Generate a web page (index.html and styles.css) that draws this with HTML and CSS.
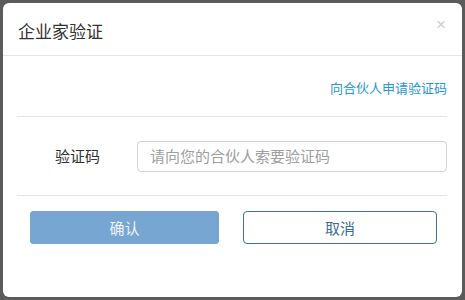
FILE: index.html
```html
<!DOCTYPE html>
<html lang="zh">
<head>
    <meta charset="UTF-8">
    <title>企业家验证</title>
    <link rel="stylesheet" href="styles.css">
</head>
<body>
    <div class="modal">
        <div class="modal-header">
            <h3>企业家验证</h3>
            <span class="close">×</span>
        </div>
        <div class="modal-body">
            <div class="link-row">
                <a href="#" class="apply-link">向合伙人申请验证码</a>
            </div>
            <div class="form-row">
                <label class="label">验证码</label>
                <input class="input" type="text" placeholder="请向您的合伙人索要验证码">
            </div>
            <div class="buttons">
                <button class="btn btn-confirm">确认</button>
                <button class="btn btn-cancel">取消</button>
            </div>
        </div>
    </div>
</body>
</html>
```

FILE: styles.css
```css
body {
    margin: 0;
    padding: 3px;
    background-color: #5b5b5b;
    font-family: "Liberation Sans", "Noto Sans CJK SC", sans-serif;
}
.modal {
    width: 459px;
    height: 294px;
    background-color: #fff;
    border-radius: 6px;
    box-sizing: border-box;
}
.modal-header {
    height: 53px;
    border-bottom: 1px solid #e5e5e5;
    display: flex;
    align-items: center;
    justify-content: space-between;
    padding: 0 15px;
    box-sizing: border-box;
}
.modal-header h3 {
    margin: 0;
    font-size: 17px;
    font-weight: normal;
    color: #333;
    padding-top: 3px;
}
.close {
    color: #cfcfcf;
    font-size: 17px;
    margin-top: -9px;
    margin-right: 1px;
}
.modal-body {
    padding: 0 15px 0 14px;
}
.link-row {
    height: 60px;
    border-bottom: 1px solid #e5e5e5;
    display: flex;
    align-items: center;
    justify-content: flex-end;
}
.apply-link {
    color: #2a97d2;
    font-size: 13px;
    text-decoration: none;
    padding-top: 3px;
}
.form-row {
    height: 78px;
    border-bottom: 1px solid #e5e5e5;
    display: flex;
    align-items: center;
}
.label {
    width: 120px;
    padding-left: 38px;
    box-sizing: border-box;
    font-size: 15px;
    color: #333;
    margin-top: -2px;
}
.input {
    flex: 1;
    height: 31px;
    box-sizing: border-box;
    border: 1px solid #d2d2d2;
    border-radius: 4px;
    padding: 0 12px;
    font-family: inherit;
    font-size: 15px;
    color: #333;
    margin-top: 1px;
}
.input::placeholder {
    color: #a0a0a0;
}
.buttons {
    display: flex;
    padding-top: 15px;
}
.btn {
    height: 33px;
    font-family: inherit;
    font-size: 15px;
    border-radius: 3px;
    cursor: pointer;
}
.btn-confirm {
    width: 189px;
    margin-left: 13px;
    background-color: #78a6d2;
    border: 1px solid #78a6d2;
    color: #eef4fa;
}
.btn-cancel {
    width: 194px;
    margin-left: 24px;
    background-color: #fff;
    border: 1px solid #41709e;
    color: #3b6c9c;
    border-radius: 4px;
}
```
